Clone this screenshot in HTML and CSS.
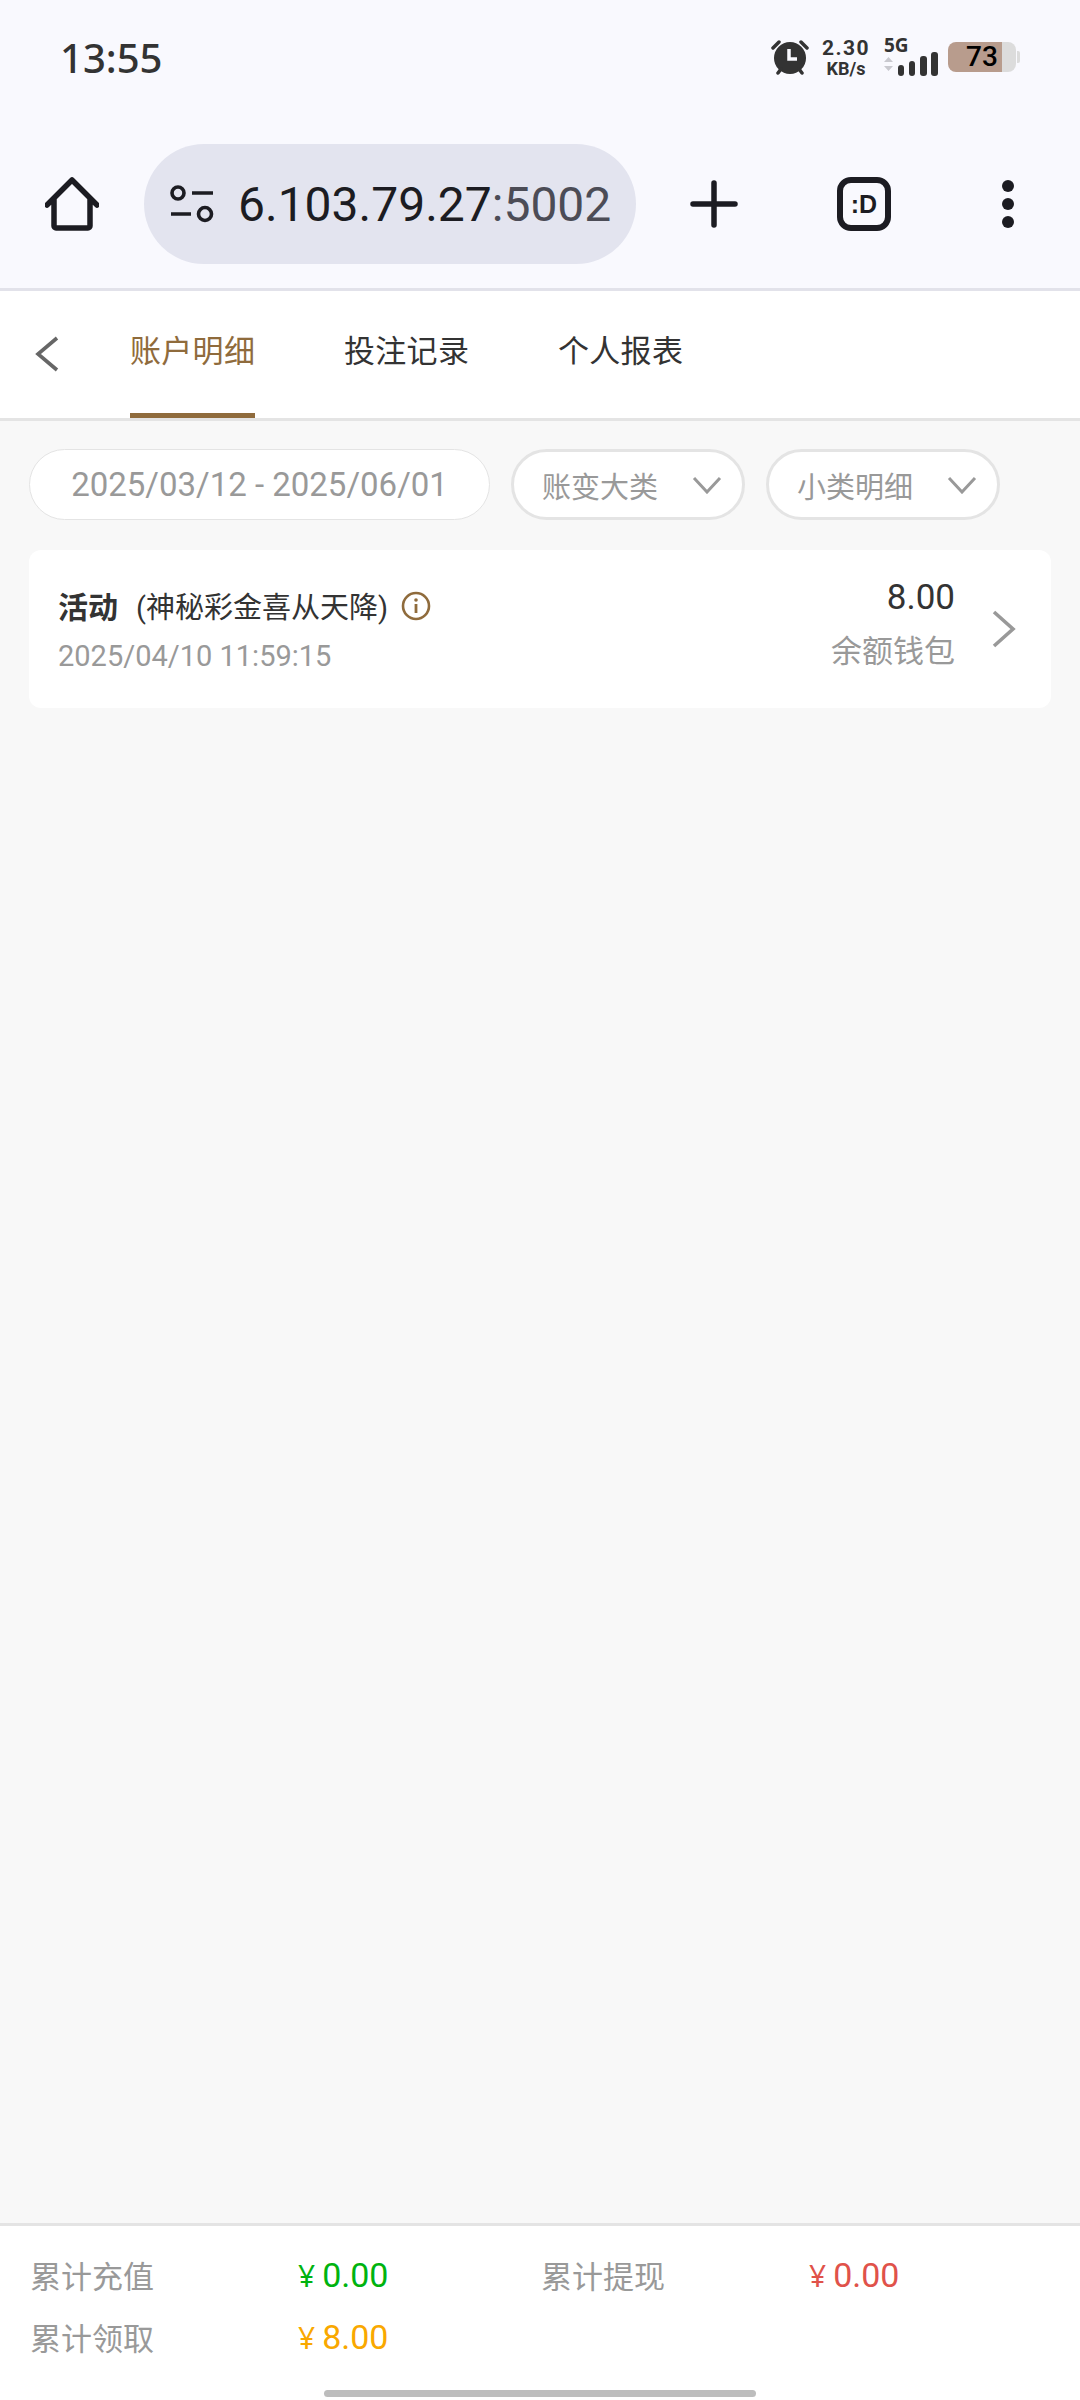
FILE: index.html
```html
<!DOCTYPE html>
<html lang="zh">
<head>
  <meta charset="utf-8">
  <meta name="viewport" content="width=device-width, initial-scale=1.0">
  <link rel="stylesheet" href="styles.css">
</head>
<body>
  <div id="app">

    <header class="chrome">
      <div class="status-bar">
        <span class="clock">13:55</span>
        <div class="status-icons">
          <svg class="alarm" width="38" height="36" viewBox="0 0 38 36">
            <circle cx="19" cy="19" r="16" fill="#333"/>
            <path d="M2 9 L8 3 M36 9 L30 3 M7 34 L10 30 M31 34 L28 30" stroke="#333" stroke-width="3.5" stroke-linecap="round"/>
            <path d="M18 10 V20 H26" fill="none" stroke="#f9f9fe" stroke-width="3.5"/>
          </svg>
          <div class="speed"><span class="speed-num">2.30</span><span class="speed-unit">KB/s</span></div>
          <div class="net">
            <span class="net-label">5G</span>
            <svg width="54" height="24" viewBox="0 0 54 24">
              <path d="M4.5 0 L9 5 H0 Z M4.5 14 L9 9 H0 Z" transform="translate(0 5)" fill="#c9c9cf"/>
              <rect x="14" y="13" width="6" height="11" rx="3" fill="#333"/>
              <rect x="25" y="9" width="6" height="15" rx="3" fill="#333"/>
              <rect x="36" y="4" width="7" height="20" rx="3" fill="#333"/>
              <rect x="47" y="0" width="7" height="24" rx="3" fill="#333"/>
            </svg>
          </div>
          <div class="battery"><span>73</span></div>
        </div>
      </div>

      <div class="browser-bar">
        <svg class="home-icon" width="54" height="54" viewBox="0 0 54 54">
          <path d="M2 28 L27 3 L52 28 M9 22 V49 a2 2 0 0 0 2 2 H43 a2 2 0 0 0 2 -2 V22" fill="none" stroke="#1c1c22" stroke-width="5.5" stroke-linecap="round" stroke-linejoin="round"/>
        </svg>
        <div class="address-pill">
          <svg width="46" height="38" viewBox="0 0 46 38">
            <circle cx="9" cy="8" r="6" fill="none" stroke="#1c1c22" stroke-width="3.6"/>
            <circle cx="36" cy="29" r="6.5" fill="none" stroke="#1c1c22" stroke-width="3.6"/>
            <path d="M23 8 H44 M2 29 H22" stroke="#1c1c22" stroke-width="3.6"/>
          </svg>
          <span class="url">6.103.79.27<span class="url-port">:5002</span></span>
        </div>
        <svg class="plus-icon" width="48" height="48" viewBox="0 0 48 48">
          <path d="M24 3 V45 M3 24 H45" stroke="#1c1c22" stroke-width="5.5" stroke-linecap="round"/>
        </svg>
        <div class="tab-count">:D</div>
        <svg class="more-icon" width="12" height="48" viewBox="0 0 12 48">
          <circle cx="6" cy="6" r="6" fill="#1c1c22"/>
          <circle cx="6" cy="24" r="6" fill="#1c1c22"/>
          <circle cx="6" cy="42" r="6" fill="#1c1c22"/>
        </svg>
      </div>
    </header>

    <nav class="tabs">
      <svg class="back-icon" width="24" height="36" viewBox="0 0 24 36">
        <path d="M22 2 L3 18 L22 34" fill="none" stroke="#666" stroke-width="3.6"/>
      </svg>
      <a class="tab active">账户明细</a>
      <a class="tab">投注记录</a>
      <a class="tab">个人报表</a>
    </nav>

    <main class="content">
      <div class="filters">
        <div class="pill date-pill">2025/03/12 - 2025/06/01</div>
        <div class="pill select-pill">
          <span>账变大类</span>
          <svg width="30" height="18" viewBox="0 0 30 18"><path d="M2 2 L15 16 L28 2" fill="none" stroke="#999" stroke-width="3"/></svg>
        </div>
        <div class="pill select-pill">
          <span>小类明细</span>
          <svg width="30" height="18" viewBox="0 0 30 18"><path d="M2 2 L15 16 L28 2" fill="none" stroke="#999" stroke-width="3"/></svg>
        </div>
      </div>

      <div class="record">
        <div class="record-left">
          <div class="record-title">
            <strong>活动</strong>
            <span class="record-sub">(神秘彩金喜从天降)</span>
            <svg width="30" height="30" viewBox="0 0 30 30">
              <circle cx="15" cy="15" r="13" fill="none" stroke="#8f6b3c" stroke-width="2.6"/>
              <circle cx="15" cy="9" r="1.8" fill="#8f6b3c"/>
              <path d="M15 13 V22" stroke="#8f6b3c" stroke-width="2.8"/>
            </svg>
          </div>
          <div class="record-time">2025/04/10 11:59:15</div>
        </div>
        <div class="record-right">
          <div class="record-amount">8.00</div>
          <div class="record-wallet">余额钱包</div>
        </div>
        <svg class="record-arrow" width="24" height="38" viewBox="0 0 24 38">
          <path d="M2 2 L21 19 L2 36" fill="none" stroke="#999" stroke-width="3.6"/>
        </svg>
      </div>
    </main>

    <footer class="summary">
      <div class="summary-grid">
        <span class="sum-label">累计充值</span>
        <span class="sum-value green"><i>¥</i>0.00</span>
        <span class="sum-label">累计提现</span>
        <span class="sum-value red"><i>¥</i>0.00</span>
        <span class="sum-label">累计领取</span>
        <span class="sum-value orange"><i>¥</i>8.00</span>
      </div>
      <div class="home-bar"></div>
    </footer>

  </div>
</body>
</html>
```

FILE: styles.css
```css
* {
  box-sizing: border-box;
}

body {
  margin: 0;
  font-family: Roboto, "Noto Sans CJK SC", sans-serif;
  color: #333;
}

#app {
  display: flex;
  flex-direction: column;
  width: 1080px;
  height: 2400px;
  background: #f8f8f8;
}

/* Browser chrome on top */
.chrome {
  height: 291px;
  flex-shrink: 0;
  background: #f9f9fe;
  border-bottom: 3px solid #e2e2ea;
}

.status-bar {
  display: flex;
  align-items: center;
  justify-content: space-between;
  height: 114px;
  padding: 0 60px 0 60px;
}

.clock {
  font-family: "Noto Sans", sans-serif;
  font-size: 40px;
  font-weight: 500;
  color: #333;
}

.status-icons {
  display: flex;
  align-items: center;
}

.alarm {
  margin-right: 14px;
}

.speed {
  display: flex;
  flex-direction: column;
  align-items: center;
  width: 46px;
  margin-right: 15px;
  font-weight: 700;
}

.speed-num {
  font-size: 21px;
  line-height: 22px;
  letter-spacing: 1.5px;
}

.speed-unit {
  font-size: 18px;
  line-height: 19px;
}

.net {
  display: flex;
  flex-direction: column;
  margin-right: 10px;
}

.net-label {
  height: 13px;
  font-family: "Noto Sans", sans-serif;
  font-size: 19px;
  font-weight: 700;
  line-height: 13px;
}

.battery {
  position: relative;
  width: 68px;
  height: 30px;
  border-radius: 8px;
  background: linear-gradient(to right, #b89c8d 54px, #dcdcdc 54px);
  color: #000;
  font-size: 28px;
  font-weight: 500;
  line-height: 30px;
  text-align: center;
  margin-right: 4px;
}

.battery::after {
  content: "";
  position: absolute;
  top: 9px;
  right: -4px;
  width: 3px;
  height: 12px;
  border-radius: 0 2px 2px 0;
  background: #dcdcdc;
}

.browser-bar {
  display: flex;
  align-items: center;
  height: 120px;
  margin-top: 30px;
  padding-left: 45px;
}

.address-pill {
  display: flex;
  align-items: center;
  gap: 23px;
  width: 492px;
  height: 120px;
  margin-left: 45px;
  padding-left: 25px;
  border-radius: 60px;
  background: #e3e4ef;
}

.url {
  font-size: 48px;
  color: #1c1c22;
  white-space: nowrap;
}

.url-port {
  color: #4c4c56;
}

.plus-icon {
  margin-left: 54px;
}

.tab-count {
  display: flex;
  align-items: center;
  justify-content: center;
  width: 54px;
  height: 54px;
  margin-left: 99px;
  border: 6px solid #1c1c22;
  border-radius: 14px;
  color: #1c1c22;
  font-family: "Liberation Sans", sans-serif;
  font-size: 25px;
  font-weight: 700;
}

.more-icon {
  margin-left: 111px;
}

/* Tabs */
.tabs {
  display: flex;
  align-items: stretch;
  height: 130px;
  flex-shrink: 0;
  padding-left: 35px;
  background: #fff;
  border-bottom: 3px solid #e4e4e4;
}

.back-icon {
  align-self: center;
  margin: -2px 71px 0 0;
}

.tab {
  margin-right: 89px;
  padding-top: 38px;
  width: 125px;
  font-size: 31px;
  letter-spacing: 0.3px;
  white-space: nowrap;
  line-height: 46px;
  color: #333;
  border-bottom: 5px solid transparent;
}

.tab.active {
  color: #8f6b3c;
  border-bottom-color: #8f6b3c;
}

/* Filters and list */
.content {
  flex: 1;
  padding: 28px 29px 0;
}

.filters {
  display: flex;
  height: 71px;
}

.pill {
  display: flex;
  align-items: center;
  height: 71px;
  border-radius: 36px;
  background: #fff;
  color: #999;
}

.date-pill {
  justify-content: center;
  width: 461px;
  border: 1px solid #e4e4e4;
  font-size: 33px;
}

.select-pill {
  justify-content: space-between;
  width: 234px;
  margin-left: 21px;
  padding: 0 20px 0 28px;
  border: 3px solid #e4e4e4;
  font-size: 29px;
}

.select-pill + .select-pill {
  margin-left: 21px;
}

.record {
  display: flex;
  align-items: center;
  width: 1022px;
  height: 158px;
  margin-top: 30px;
  padding: 0 35px 0 29px;
  border-radius: 12px;
  background: #fff;
}

.record-left {
  flex: 1;
}

.record-title {
  display: flex;
  align-items: center;
  height: 44px;
}

.record-title strong {
  font-size: 30px;
  font-weight: 700;
}

.record-sub {
  margin-left: 18px;
  font-size: 29px;
}

.record-title svg {
  margin-left: 13px;
  margin-top: 2px;
}

.record-time {
  margin-top: 12px;
  margin-bottom: 3px;
  font-size: 29px;
  color: #999;
}

.record-right {
  margin-bottom: 8px;
  text-align: right;
}

.record-amount {
  font-size: 35px;
  line-height: 44px;
}

.record-wallet {
  margin-top: 10px;
  font-size: 31px;
  line-height: 44px;
  color: #999;
}

.record-arrow {
  margin-left: 37px;
}

/* Footer totals */
.summary {
  position: relative;
  height: 177px;
  flex-shrink: 0;
  background: #fff;
  border-top: 3px solid #e4e4e4;
}

.summary-grid {
  display: grid;
  grid-template-columns: 268px 243px 268px 1fr;
  grid-auto-rows: 62px;
  padding: 17px 0 0 30px;
  align-items: center;
}

.sum-label {
  font-size: 31px;
  color: #999;
}

.sum-value {
  padding-top: 2px;
  font-size: 34px;
}

.sum-value i {
  margin-right: 7px;
  font-family: "Noto Sans", sans-serif;
  font-style: normal;
  font-size: 30px;
}

.green { color: #00b30f; }
.red { color: #e0524a; }
.orange { color: #f9a800; }

.home-bar {
  position: absolute;
  left: 324px;
  bottom: 3px;
  width: 432px;
  height: 7px;
  border-radius: 4px;
  background: #bdbdbd;
}
```
